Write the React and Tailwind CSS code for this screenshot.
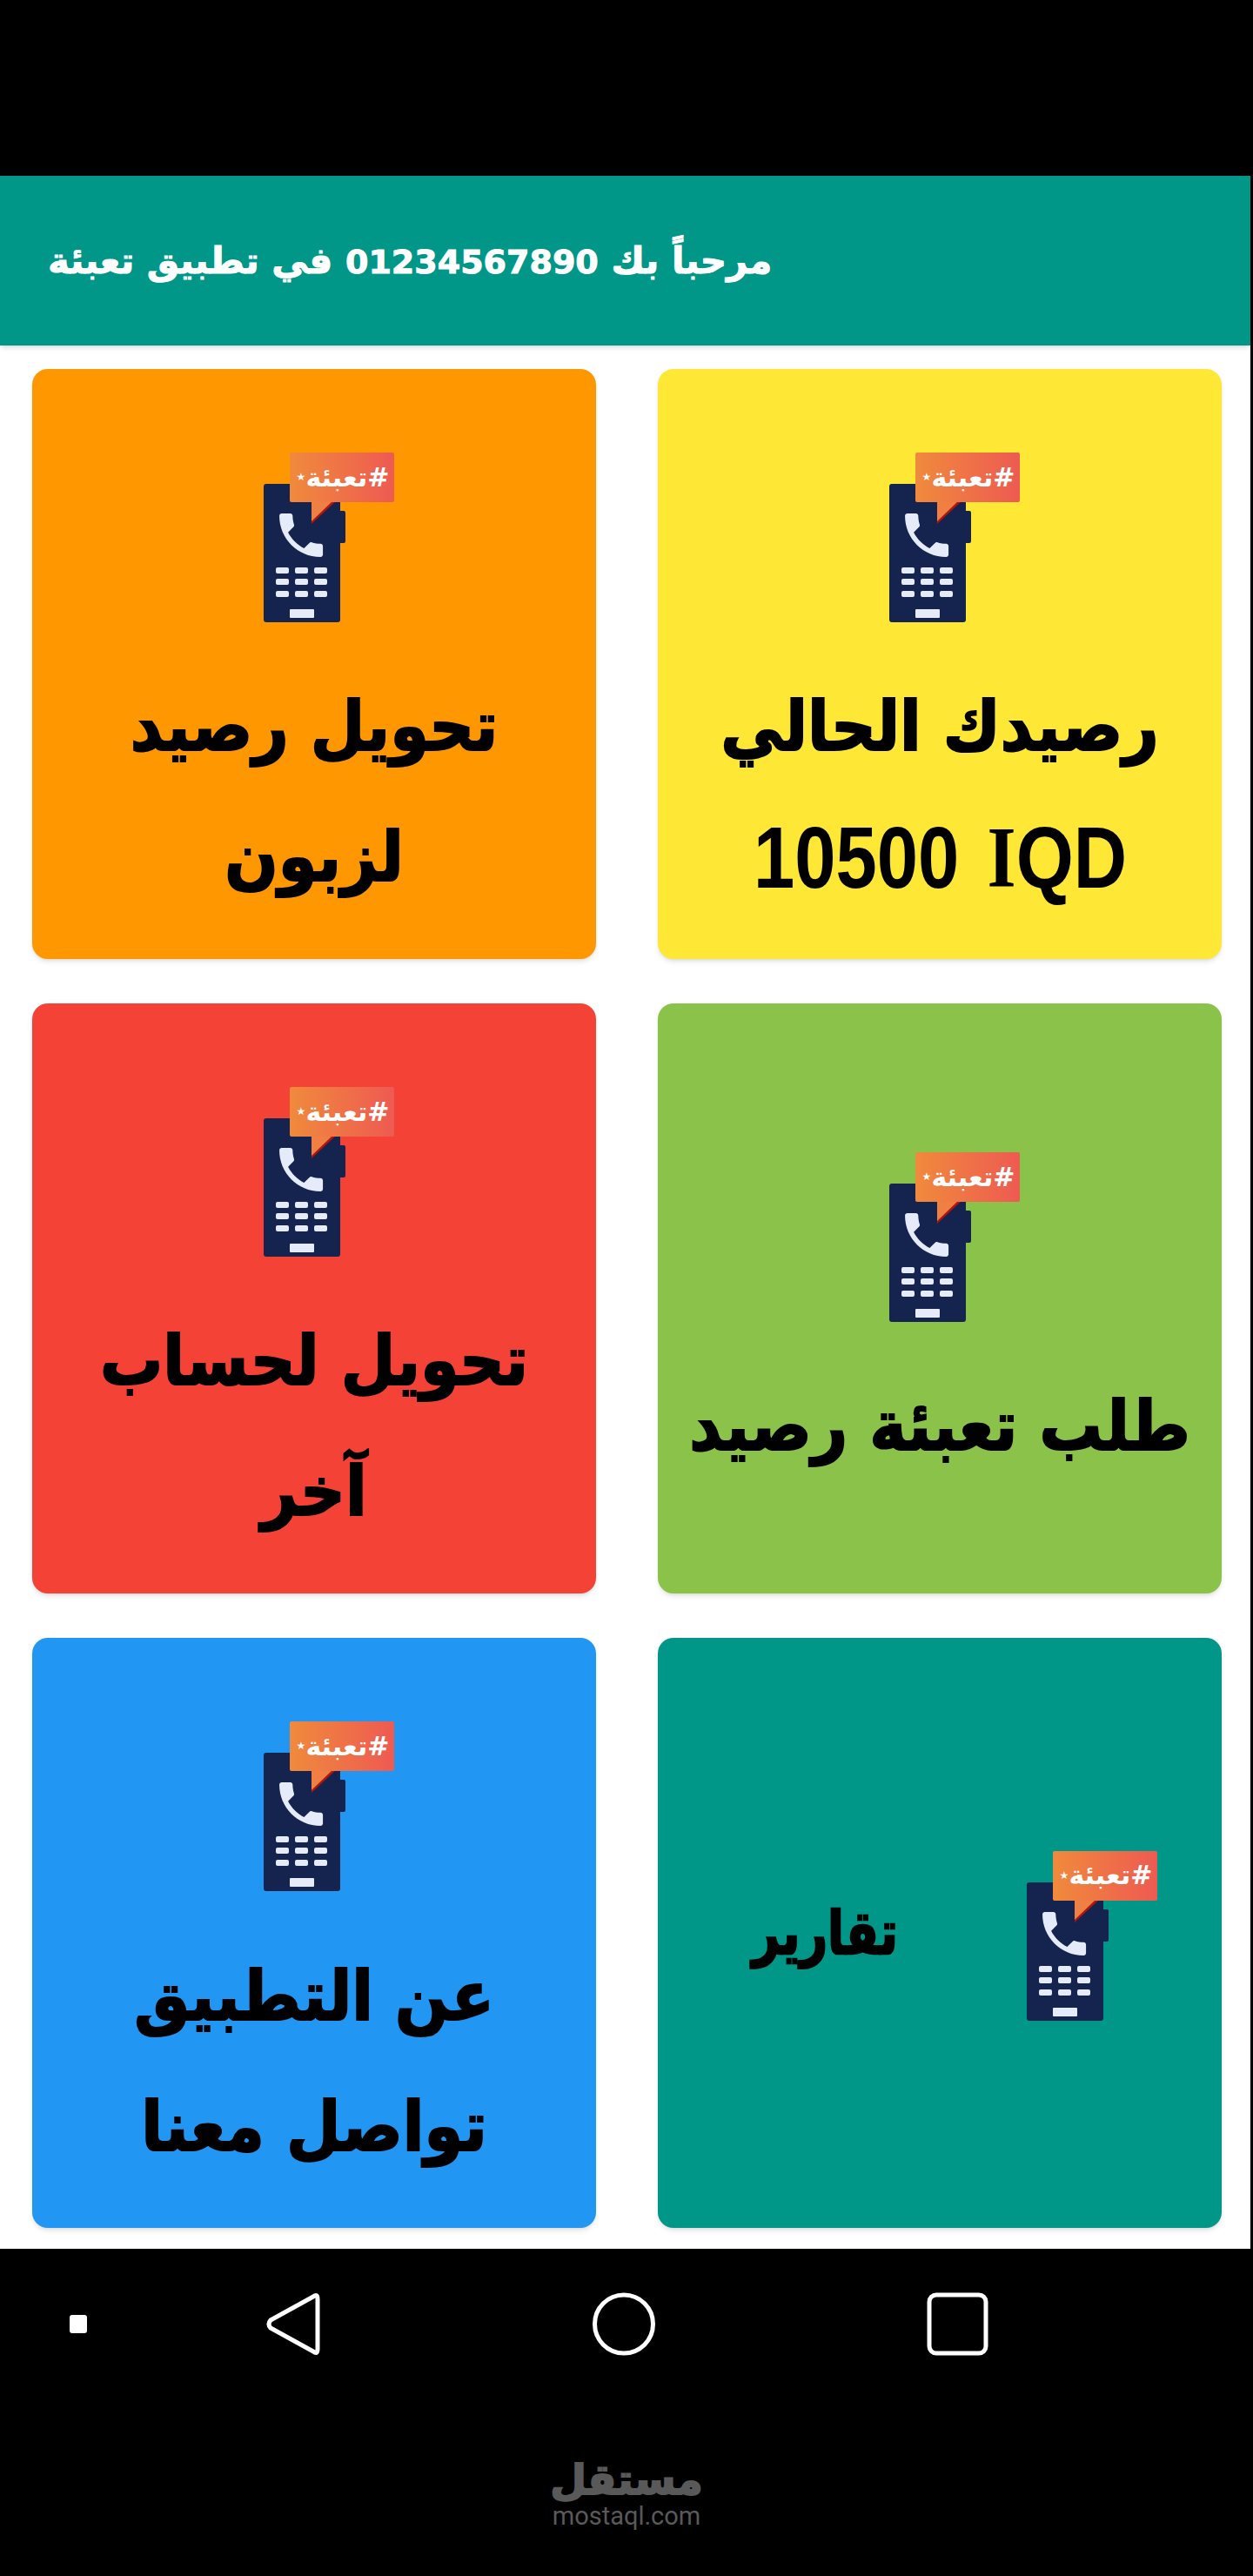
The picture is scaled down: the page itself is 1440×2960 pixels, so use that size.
import React from 'react';

const arabic = "font-['DejaVu_Sans',sans-serif]";
const heavy = '[-webkit-text-stroke:2px_#000]';

// phone with the speech bubble, same drawing on every card
const AppIcon = ({ className = '' }) => (
  <div className={`relative w-[150px] h-[195px] shrink-0 ${className}`}>
    <svg viewBox="0 0 150 195" className="w-[150px] h-[195px]">
      <defs>
        <linearGradient id="bubble" x1="0" x2="1" y1="0" y2="0">
          <stop offset="0" stopColor="#f08a3c" />
          <stop offset="1" stopColor="#ee5a52" />
        </linearGradient>
      </defs>
      <rect x="0" y="36" width="88" height="159" rx="3" fill="#14244f" />
      <rect x="84" y="67" width="10" height="37" rx="2" fill="#14244f" />
      <path
        transform="translate(9.7 61.7) scale(2.78)"
        fill="#e6ebfa"
        d="M6.62 10.79c1.44 2.83 3.76 5.14 6.59 6.59l2.2-2.2c.27-.27.67-.36 1.02-.24 1.12.37 2.33.57 3.57.57.55 0 1 .45 1 1V20c0 .55-.45 1-1 1-9.39 0-17-7.61-17-17 0-.55.45-1 1-1h3.5c.55 0 1 .45 1 1 0 1.25.2 2.45.57 3.57.11.35.03.74-.25 1.02l-2.2 2.2z"
      />
      {[132, 145, 159].map((y) =>
        [14, 36, 58].map((x) => (
          <rect key={`${x}-${y}`} x={x} y={y} width="15" height="7" rx="2" fill="#e6ebfa" />
        ))
      )}
      <rect x="30" y="180" width="28" height="10" rx="1" fill="#e6ebfa" />
      <polygon points="55,55 55,82 84,55" fill="#b0160f" />
      <polygon points="55,55 55,79 80,55" fill="#ef7f42" />
      <rect x="30" y="0" width="120" height="57" rx="2" fill="url(#bubble)" />
    </svg>
    <div
      dir="rtl"
      className={`absolute left-[32px] top-[1px] w-[118px] h-[54px] flex items-center justify-center text-white font-bold text-[30px] whitespace-nowrap ${arabic}`}
    >
      #تعبئة<span className="text-[12px]">★</span>
    </div>
  </div>
);

const Line = ({ text }) => (
  <div
    dir="rtl"
    className={`h-[150px] flex items-center justify-center text-black font-bold text-[72px] whitespace-nowrap ${heavy} ${arabic}`}
  >
    <span className="scale-y-110">{text}</span>
  </div>
);

const Card = ({ color, lines }) => (
  <div className={`${color} h-[678px] rounded-[18px] shadow-md flex flex-col items-center justify-center pt-[54px]`}>
    <AppIcon className="ml-[34px] mb-[45px]" />
    <div className="w-full">
      {lines.map((line) => (
        <Line key={line} text={line} />
      ))}
    </div>
  </div>
);

const App = () => {
  return (
    <div className="h-[2960px] bg-black flex flex-col">
      <div className="h-[202px] shrink-0" />
      <div className="w-[1437px] h-[2382px] bg-white shrink-0">
        <div className="h-[195px] bg-[#009688] shadow-md flex items-center pl-[55px]">
          <div dir="rtl" className={`text-white font-bold text-[42px] whitespace-nowrap [-webkit-text-stroke:1px_#fff] ${arabic}`}>
            مرحباً بك <span className="text-[38px]">01234567890</span> في تطبيق تعبئة
          </div>
        </div>
        <div className="grid grid-cols-2 gap-x-[71px] gap-y-[51px] pl-[37px] pr-[33px] pt-[27px]">
          <Card color="bg-[#ff9800]" lines={['تحويل رصيد', 'لزبون']} />
          <div className="bg-[#ffe835] h-[678px] rounded-[18px] shadow-md flex flex-col items-center justify-center pt-[54px]">
            <AppIcon className="ml-[34px] mb-[45px]" />
            <Line text="رصيدك الحالي" />
            <div className="h-[150px] flex items-center text-black font-bold text-[100px] font-['Liberation_Sans',sans-serif] whitespace-nowrap scale-x-[0.85]">
              10500
              <span className="ml-[38px] font-['Liberation_Serif',serif]">I</span>
              QD
            </div>
          </div>
          <Card color="bg-[#f44336]" lines={['تحويل لحساب', 'آخر']} />
          <Card color="bg-[#8bc34a]" lines={['طلب تعبئة رصيد']} />
          <Card color="bg-[#2196f3]" lines={['عن التطبيق', 'تواصل معنا']} />
          <div className="bg-[#009688] h-[678px] rounded-[18px] shadow-md flex flex-row-reverse items-center pr-[74px] gap-[148px]">
            <AppIcon className="mt-[6px]" />
            <div dir="rtl" className={`text-black font-bold text-[55px] whitespace-nowrap ${heavy} ${arabic}`}>
              <span className="inline-block scale-y-125">تقارير</span>
            </div>
          </div>
        </div>
      </div>
      <div className="flex items-center h-[73px] mt-[50px] pl-[80px]">
        <div className="w-[20px] h-[21px] bg-white rounded-[3px]" />
        <svg viewBox="0 0 63 73" className="w-[63px] h-[73px] ml-[205px]" fill="none" stroke="white" strokeWidth="5" strokeLinejoin="round">
          <path d="M55 5 Q60 1 60 8 L60 65 Q60 72 55 68 L6 41 Q2 36.5 6 32 Z" />
        </svg>
        <svg viewBox="0 0 72 73" className="w-[72px] h-[73px] ml-[313px]" fill="none" stroke="white" strokeWidth="5">
          <circle cx="36" cy="36.5" r="33.5" />
        </svg>
        <svg viewBox="0 0 71 73" className="w-[71px] h-[73px] ml-[312px]" fill="none" stroke="white" strokeWidth="5">
          <rect x="3" y="3" width="65" height="67" rx="8" />
        </svg>
      </div>
      <div className="flex flex-col items-center mt-[113px] text-[#595959]">
        <div dir="rtl" className={`font-bold text-[48px] leading-[58px] [-webkit-text-stroke:2px_#595959] ${arabic}`}>مستقل</div>
        <div className="font-['Roboto',sans-serif] text-[29px] leading-[26px]">mostaql.com</div>
      </div>
    </div>
  );
};

export default App;
